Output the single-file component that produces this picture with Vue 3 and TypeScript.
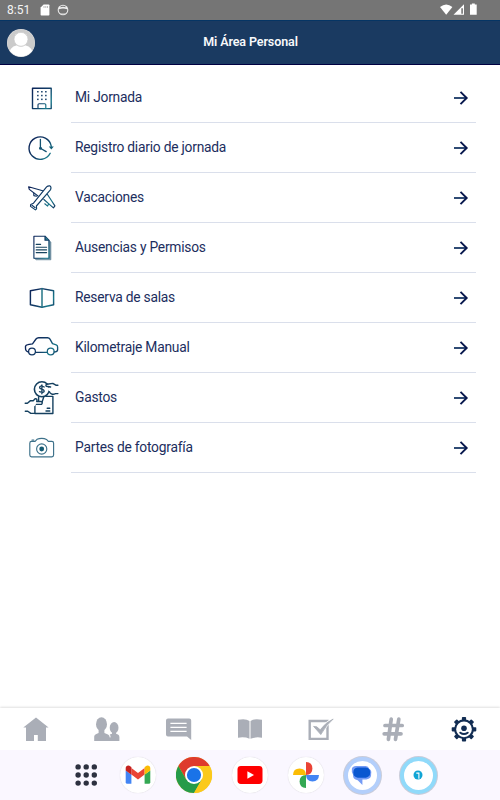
<script setup lang="ts">
interface MenuItem {
  id: string
  label: string
}

const items: MenuItem[] = [
  { id: 'building', label: 'Mi Jornada' },
  { id: 'clock', label: 'Registro diario de jornada' },
  { id: 'plane', label: 'Vacaciones' },
  { id: 'doc', label: 'Ausencias y Permisos' },
  { id: 'book', label: 'Reserva de salas' },
  { id: 'car', label: 'Kilometraje Manual' },
  { id: 'money', label: 'Gastos' },
  { id: 'camera', label: 'Partes de fotografía' },
]

const dots: number[] = [0, 1, 2]
const teeth: number[] = [0, 45, 90, 135, 180, 225, 270, 315]
</script>

<template>
  <div class="screen">
    <div class="status">
      <span class="time">8:51</span>
      <svg class="sd" width="10" height="12" viewBox="0 0 10 12"><path d="M3.6.5H8.6Q9.4.5 9.4 1.3V10.7Q9.4 11.5 8.6 11.5H1.4Q.6 11.5.6 10.7V3.6Z" fill="#fff" /><path d="M4 2.2V3.8M5.8 2.2V3.8M7.5 2.2V3.8" stroke="#888" stroke-width=".7" /></svg>
      <svg class="face" width="12" height="12" viewBox="0 0 12 12"><circle cx="6" cy="6" r="4.8" fill="none" stroke="#e8e8e8" stroke-width="1.1" /><path d="M1.8 2.6L3.6 3.2Q6 2.2 8.4 3.2L10.2 2.6L10 5.2Q6 3.8 2 5.2Z" fill="#eee" /><path d="M3 9Q6 10 9 9Q8 10.8 6 10.8T3 9" fill="#ddd" /></svg>
      <svg class="signals" width="38" height="14" viewBox="0 0 38 14">
        <path d="M0 4.1Q6.2-1.2 12.4 4.1L6.2 11.7Z" fill="#fff" />
        <path d="M13.5 11.8L24 1.2V11.8Z" fill="#fff" /><path d="M21.3 5.3H22.9V10.7H21.3Z" fill="#757575" />
        <path d="M31.9.5H34.8V1.6H36.7V11.7H30V1.6H31.9Z" fill="#fff" />
      </svg>
    </div>

    <header class="header">
      <svg class="avatar" width="28" height="28" viewBox="0 0 28 28">
        <clipPath id="avatarClip"><circle cx="14" cy="14" r="13.6" /></clipPath>
        <circle cx="14" cy="14" r="14" fill="#dedede" />
        <g clip-path="url(#avatarClip)"><rect width="28" height="28" fill="#cbcbcb" /><path d="M2 28Q1.8 17.5 10 16.2Q14 19 18 16.2Q26.2 17.5 26 28Z" fill="#fff" /><circle cx="14" cy="10.3" r="7" fill="#fff" stroke="#cbcbcb" stroke-width=".8" /></g>
      </svg>
      <h1>Mi Área Personal</h1>
    </header>

    <main class="list">
      <svg class="defs" width="0" height="0">
        <linearGradient id="ink" gradientUnits="userSpaceOnUse" x1="6" y1="10" x2="34" y2="30"><stop offset="0" stop-color="#0b1e55" /><stop offset=".55" stop-color="#123f68" /><stop offset=".8" stop-color="#18798b" /><stop offset="1" stop-color="#102e5c" /></linearGradient>
      </svg>
      <div v-for="item in items" :key="item.id" class="row">
        <svg class="icon" width="40" height="40" viewBox="0 0 40 40" fill="none" stroke="url(#ink)" stroke-width="1.15" stroke-linejoin="round" stroke-linecap="round">
          <g v-if="item.id === 'building'">
            <path d="M11.5 10.2H30.2V30.6H11.5Z" stroke-width="1.4" />
            <path d="M17 30.5V26.8Q17 25.7 18.1 25.7H23.7Q24.8 25.7 24.8 26.8V30.5" />
            <g fill="#173f68" stroke="none">
              <template v-for="r in dots" :key="r"><rect v-for="c in dots" :key="c" :x="16.1 + c * 4" :y="13 + r * 3.8" width="1.5" height="1.5" /></template>
            </g>
          </g>
          <g v-else-if="item.id === 'clock'">
            <path d="M30.3 18.4A11.2 11.2 0 1 0 29.2 25.3" stroke-width="1.4" />
            <path d="M27.8 18.5H32.8L30.3 21.6Z" fill="#126078" stroke="none" />
            <path d="M19.4 11.3V20.2L25.2 23.6" stroke="#145372" stroke-width="1.3" />
            <circle cx="19.5" cy="20.2" r="1.5" fill="#145372" stroke="none" />
          </g>
          <g v-else-if="item.id === 'plane'">
            <path d="M21.7 12.7L7.6 8.8L8.3 11.4L17 18M26.3 16.3L33.9 27.9L32.4 29.9L22.9 21.5" />
            <path d="M12.5 25.2L25.6 8.9Q27 7.6 29 7.9Q30.6 9 29.6 11.6L15.4 28L15.6 30.8L14.4 31.9L9.5 28.4L9.7 26.5Z" />
            <path d="M12.8 15V17.6L15.5 18.2M27.6 26L26.6 28.1L23.8 25.8M11 27.3L14.2 29.7" />
          </g>
          <g v-else-if="item.id === 'doc'">
            <path d="M28 12.5L29.9 14V31.8H15.2L13.2 30.2H28Z" fill="#7895a6" stroke="#547b91" stroke-width=".6" />
            <path d="M12.9 8.2H24L27.9 12.2V30.2H12.9Z" fill="#fff" />
            <path d="M24 8.2V12.2H27.9" fill="#27778a" />
            <path d="M15.2 16.4H19.6M15.2 19.2H25.6M15.2 21.9H25.6M15.2 24.6H25.6" stroke="#17445f" />
          </g>
          <g v-else-if="item.id === 'book'">
            <path d="M9.4 12.8L21 10.6L32.6 12.8V26.8L21 29.2L9.4 26.8Z" stroke-width="1.45" />
            <path d="M21 10.6V29" stroke="#257687" stroke-width="1.5" />
          </g>
          <g v-else-if="item.id === 'car'">
            <path d="M7.5 24C5.2 23.5 4.4 22.7 4.5 20V18.3Q4.9 17 6.8 16.7L11.5 15.8L15 11Q16 9.7 17.6 9.7H26.5Q28.2 9.7 29 11.1L31.5 15.6L35.2 16.8Q36.6 17.4 36.6 19V21.8Q36.3 24 33.2 24M14.6 24.4H26.2" stroke-width="1.35" />
            <circle cx="11" cy="23.4" r="3.4" stroke-width="1.25" /><circle cx="29.7" cy="23.4" r="3.4" stroke-width="1.25" />
          </g>
          <g v-else-if="item.id === 'money'" stroke="#15405f">
            <path d="M25 18.4H31.9V35.5H13.9V27M26.2 30.2H28.8M25 33H28.8M17.6 19V23M22.8 18.8L21 24.4" stroke-width="1.4" />
            <circle cx="20.9" cy="11.3" r="7.5" stroke-width="1.6" />
            <path d="M23.2 9Q18.8 7.1 18.6 9.5C18.6 11.8 23.1 10.6 23.2 13.1Q22.8 15.3 18.5 13.7M20.9 7V15.7" stroke-width="1.35" />
            <path d="M36.9 7.2H34.8L31.8 5.4L26 6.2Q24.2 6.9 25.4 8.3L29.6 9Q26.4 9.6 27 11.4L28.6 14.6L30.4 15.8Q32.5 16.8 34.4 15.6H36.9" fill="#fff" stroke="none" />
            <path d="M36.9 7.2H34.8L31.8 5.4L26 6.2Q24.2 6.9 25.4 8.3L29.6 9M28.4 13.6Q28.6 15 30.4 15.8Q32.5 16.8 34.4 15.6H36.9" stroke-width="1.4" />
            <path d="M4.2 25.2H6.4L9.5 22.6L12.2 22.8L14.4 20.6Q16.6 20.7 15.7 23.5H20.4Q22 24.9 20.4 26.4H15.4L12.6 28.7V35H9.8L6.8 33.2H4.3Z" fill="#fff" stroke="none" />
            <path d="M4.2 25.2H6.4L9.5 22.6L12.2 22.8L14.4 20.6Q16.6 20.7 15.7 23.5H20.4Q22 24.9 20.4 26.4H15.4M4.3 33.2H6.8L9.8 35.4H14" stroke-width="1.4" />
          </g>
          <g v-else stroke="#3d718a">
            <path d="M10.5 13.4H14.1L16 11.3Q18 10.4 20.7 10.4Q23.6 10.4 25.5 11.4L27.3 13.4H30.9Q32.6 13.4 32.6 15.2V27.1Q32.6 28.8 30.9 28.8H10.5Q8.8 28.8 8.8 27.1V15.2Q8.8 13.4 10.5 13.4ZM11 12H12.8" />
            <circle cx="20.7" cy="21" r="5.1" /><circle cx="20.7" cy="21" r="2.4" fill="#155a73" stroke="none" />
          </g>
        </svg>
        <div class="entry">
          <span class="label">{{ item.label }}</span>
          <svg class="arrow" width="16" height="16" viewBox="0 0 16 16" fill="none" stroke="#06164c" stroke-width="1.9"><path d="M1 8H14" stroke="#24426d" /><path d="M7.5 1.8L13.7 8L7.5 14.2" /></svg>
        </div>
      </div>
    </main>

    <nav class="tabs">
      <svg width="28" height="28" viewBox="0 0 28 28" fill="#aaaeb7"><path d="M14 2.6L26.6 12.5H24V26H15.8V20H12V26H4V12.5H1.3Z" /></svg>
      <svg width="28" height="28" viewBox="0 0 28 28" fill="#aaaeb7">
        <ellipse cx="8.5" cy="9.2" rx="5.5" ry="6.9" /><path d="M1.2 26V21.5Q1.3 19.6 3.3 19L5.6 18V13H11.4V18L15 19.4Q16.6 20 16.6 22V26Z" />
        <ellipse cx="21.1" cy="12.7" rx="4.4" ry="5.7" /><path d="M17.6 26V22Q17.5 20.4 16.7 19.6L19 18.8V16H23.1V18.8L25 19.5Q26.4 20.2 26.4 22V26Z" /><path d="M15 22.4H19V26H15Z" />
      </svg>
      <svg width="28" height="28" viewBox="0 0 28 28" fill="#aaaeb7"><path d="M3 3.4H24.2Q26.2 3.4 26.2 5.4V25L22 21.4H3Q1 21.4 1 19.4V5.4Q1 3.4 3 3.4Z" /><path d="M5.4 8.3H21.6M5.4 12.3H21.6M5.4 16.3H21.6" stroke="#fff" stroke-width="1.3" /></svg>
      <svg width="28" height="28" viewBox="0 0 28 28" fill="#aaaeb7"><path d="M13.5 6V23.8Q8.8 21.6 2 22.7V4.8Q9.8 3.2 13.5 6ZM14.5 6V23.8Q19.2 21.6 26 22.7V4.8Q18.2 3.2 14.5 6Z" /></svg>
      <svg width="28" height="28" viewBox="0 0 28 28" fill="#aaaeb7"><path d="M2.7 6H20.5V23.9H2.7Z" fill="none" stroke="#aaaeb7" stroke-width="2.4" /><path d="M6.6 11.4L9.8 11.8L13.2 14.8Q18.6 7.4 26.2 4Q18.8 10.3 13.8 19.6Z" stroke="#fff" stroke-width="2" /><path d="M6.6 11.4L9.8 11.8L13.2 14.8Q18.6 7.4 26.2 4Q18.8 10.3 13.8 19.6Z" stroke="#aaaeb7" stroke-width=".8" /></svg>
      <svg width="28" height="28" viewBox="0 0 28 28" fill="none" stroke="#aaaeb7" stroke-width="3.7" stroke-linecap="round"><path d="M12.2 4.2L9.4 24.3M19.8 4.2L16.5 24.3M6 10.5H23.2M5.2 18.8H22" /></svg>
      <svg width="28" height="28" viewBox="0 0 28 28">
        <g fill="#122d53"><rect v-for="a in teeth" :key="a" x="11.9" y="2" width="4.2" height="5" rx=".8" :transform="`rotate(${a} 14 14.3)`" /></g>
        <circle cx="14" cy="14.3" r="8.9" fill="#fff" stroke="#122d53" stroke-width="2.1" />
        <circle cx="14" cy="13.3" r="2.8" fill="#122d53" /><path d="M10.3 17.7Q14 20.4 17.7 17.7" fill="none" stroke="#122d53" stroke-width="2" stroke-linecap="round" />
      </svg>
    </nav>

    <footer class="dock">
      <svg width="24" height="24" viewBox="0 0 24 24" fill="#2d3140"><template v-for="r in dots" :key="r"><circle v-for="c in dots" :key="c" :cx="4.1 + c * 8.1" :cy="3.9 + r * 8.1" r="2.7" /></template></svg>
      <div class="app">
        <svg width="26" height="20" viewBox="0 0 26 20"><path d="M.7 5.5L6.4 9.5V18.8H2.4Q.7 18.8.7 17.2Z" fill="#4285f4" /><path d="M19.6 9.5L25.3 5.5V17.2Q25.3 18.8 23.6 18.8H19.6Z" fill="#34a853" /><path d="M6.4 3L13 8L19.6 3V9.5L13 14.4L6.4 9.5Z" fill="#ea4335" /><path d="M.7 5.5V3.3C.7.4 3.7-.1 5.5 1.4L6.4 2.1V9.7L.7 5.5" fill="#c5221f" /><path d="M25.3 5.5V3.3C25.3.4 22.3-.1 20.5 1.4L19.6 2.1V9.7Z" fill="#fbbc04" /></svg>
      </div>
      <div class="app">
        <svg width="36" height="36" viewBox="0 0 36 36"><circle cx="18" cy="18" r="18" fill="#fbc91b" /><path d="M2.4 9A18 18 0 0 1 33.6 9H18V18L10.2 22.5Z" fill="#de3a2d" /><path d="M2.4 9A18 18 0 0 0 18 36L25.8 22.5L10.2 22.5Z" fill="#269b49" /><path d="M18 9H33.6A18 18 0 0 1 18 36L25.8 22.5Z" fill="#fbc91b" /><circle cx="18" cy="18" r="9" fill="#fff" /><circle cx="18" cy="18" r="7.1" fill="#1a73e8" /></svg>
      </div>
      <div class="app">
        <svg width="26" height="18" viewBox="0 0 26 18"><rect x=".5" y=".1" width="25" height="17.8" rx="3.4" fill="#f00" /><path d="M10.4 5.2L17 9L10.4 12.8Z" fill="#fff" /></svg>
      </div>
      <div class="app">
        <svg width="28" height="28" viewBox="0 0 28 28"><path d="M14 1Q20.4 1.3 20.4 7.5T14 14Z" fill="#ea4335" /><path d="M27 14Q26.7 20.4 20.5 20.4T14 14Z" fill="#4285f4" /><path d="M14 27Q7.6 26.7 7.6 20.5T14 14Z" fill="#34a853" /><path d="M1 14Q1.3 7.6 7.5 7.6T14 14Z" fill="#fbbc04" /></svg>
      </div>
      <div class="app ring blue">
        <svg width="22" height="22" viewBox="0 0 22 22"><path d="M5 2H14.7Q17.4 2.1 18.3 5Q20.8 6.3 20.2 9.3Q20.6 15 15.3 15.4H11.4V21L6.7 16.2Q1.7 15.5 2 10.5Q.2 8 .9 4.5Q1.6 2 5 2Z" fill="#749bf5" /><path d="M6.7 3.6H14.8Q19.2 4 19.2 8.6T14.8 13.7H6.7Q2.3 13.2 2.3 8.6T6.7 3.6Z" fill="#0a57d0" /></svg>
      </div>
      <div class="app ring cyan">
        <svg width="10" height="10" viewBox="0 0 10 10"><circle cx="5" cy="5" r="4.5" fill="#10a5d5" /><path d="M3.3 3.1H5.9V8.8" fill="none" stroke="#fff" stroke-width="1.1" /></svg>
      </div>
    </footer>
  </div>
</template>

<style>
body {
  margin: 0;
  background: #fff;
}
</style>

<style scoped>
.screen {
  width: 500px;
  height: 800px;
  display: flex;
  flex-direction: column;
  overflow: hidden;
  background: #fff;
  font-family: Roboto, "Liberation Sans", sans-serif;
}
svg {
  display: block;
  flex: none;
}
.status {
  height: 20px;
  box-sizing: border-box;
  flex: none;
  display: flex;
  align-items: center;
  padding: 0 22px 0 7px;
  background: #757575;
  color: #f4f4f4;
}
.time {
  width: 33px;
  font-size: 12px;
  line-height: 20px;
}
.face {
  margin-left: 7px;
}
.signals {
  margin-left: auto;
  margin-bottom: 1px;
}
.header {
  height: 45px;
  box-sizing: border-box;
  flex: none;
  display: grid;
  grid-template-columns: 28px 1fr 28px;
  align-items: center;
  padding: 0 7px;
  background: #1a3a61;
  border-top: 1px solid #063564;
  border-bottom: 1px solid #000041;
}
h1 {
  margin: 0;
  padding: 0 0 1px 1px;
  text-align: center;
  font-size: 12.5px;
  line-height: 16px;
  font-weight: 600;
  letter-spacing: -0.1px;
  color: #f8f9fb;
}
.list {
  flex: 1;
  padding: 8px 24px 0 21px;
}
.defs {
  position: absolute;
}
.row {
  height: 50px;
  display: flex;
}
.icon {
  margin-top: 5px;
}
.entry {
  flex: 1;
  box-sizing: border-box;
  height: 50px;
  margin-left: 10px;
  padding: 0 7px 0 4px;
  display: flex;
  align-items: center;
  justify-content: space-between;
  border-bottom: 1px solid #dadfeb;
}
.label {
  padding-bottom: 2px;
  font-size: 13.8px;
  line-height: 20px;
  letter-spacing: -0.23px;
  white-space: nowrap;
  color: #1c2e5e;
}
.tabs {
  height: 42px;
  flex: none;
  display: grid;
  grid-template-columns: repeat(7, 1fr);
  place-items: center;
  background: #fff;
  box-shadow: 0 -1px 2px rgba(0, 0, 0, 0.12);
}
.dock {
  height: 50px;
  box-sizing: border-box;
  flex: none;
  display: grid;
  grid-template-columns: 48px repeat(6, 56px);
  place-items: center;
  padding-left: 62px;
  background: #faf7ff;
}
.app {
  width: 36px;
  height: 36px;
  display: flex;
  align-items: center;
  justify-content: center;
  border-radius: 50%;
  background: #fff;
  box-shadow: 0 0 1px rgba(0, 0, 0, 0.2);
}
.ring {
  width: 29px;
  height: 29px;
  border: 4px solid;
  box-shadow: 0 0 0 1px #c9ccda;
}
.blue {
  border-color: #b3cffb;
}
.cyan {
  border-color: #90dafa;
}
</style>
